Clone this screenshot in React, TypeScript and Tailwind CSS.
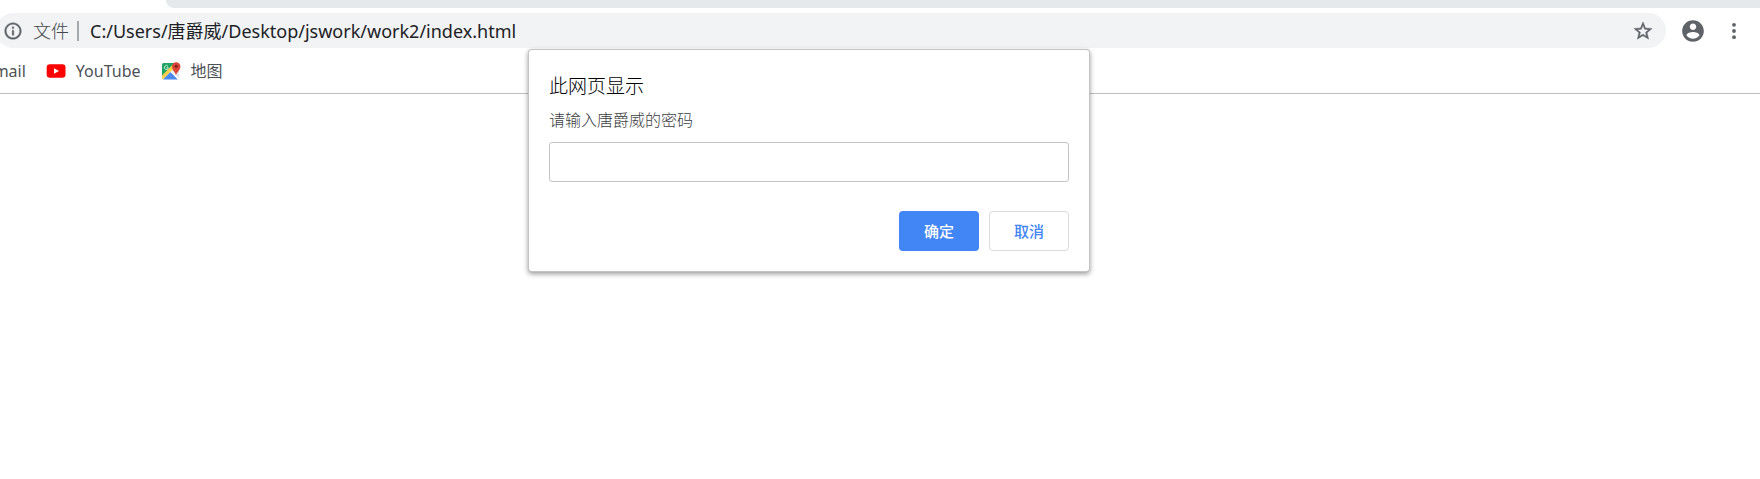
import React from "react";

function InfoIcon() {
  return (
    <svg viewBox="0 0 24 24" className="size-5 shrink-0 fill-[#5f6368]" aria-hidden="true">
      <path
        d="M11 17h2v-6h-2v6zm1-15C6.48 2 2 6.48 2 12s4.48 10 10 10 10-4.48 10-10S17.52 2 12 2zm0 18c-4.41 0-8-3.59-8-8s3.59-8 8-8 8 3.59 8 8-3.59 8-8 8zM11 9h2V7h-2v2z"
        stroke="#5f6368"
        strokeWidth="0.4"
      />
    </svg>
  );
}

function StarIcon() {
  return (
    <svg viewBox="0 0 24 24" className="size-[22px] fill-[#5f6368]" aria-hidden="true">
      <path
        d="M22 9.24l-7.19-.62L12 2 9.19 8.63 2 9.24l5.46 4.73L5.82 21 12 17.27 18.18 21l-1.63-7.03L22 9.24zM12 15.4l-3.76 2.27 1-4.28-3.32-2.88 4.38-.38L12 6.1l1.71 4.04 4.38.38-3.32 2.88 1 4.28L12 15.4z"
        stroke="#5f6368"
        strokeWidth="0.4"
      />
    </svg>
  );
}

function AccountIcon() {
  return (
    <svg viewBox="0 0 24 24" className="size-[26px] fill-[#5f6368]" aria-hidden="true">
      <path d="M12 2C6.48 2 2 6.48 2 12s4.48 10 10 10 10-4.48 10-10S17.52 2 12 2zm0 3c1.66 0 3 1.34 3 3s-1.34 3-3 3-3-1.34-3-3 1.34-3 3-3zm0 14.2c-2.5 0-4.71-1.28-6-3.22.03-1.99 4-3.08 6-3.08 1.99 0 5.97 1.09 6 3.08-1.29 1.94-3.5 3.22-6 3.22z" />
    </svg>
  );
}

function MoreIcon() {
  return (
    <svg viewBox="0 0 20 20" className="size-5 fill-[#5f6368]" aria-hidden="true">
      <circle cx="10" cy="3.800" r="1.900" />
      <circle cx="10" cy="10" r="1.900" />
      <circle cx="10" cy="16.200" r="1.900" />
    </svg>
  );
}

function YouTubeIcon() {
  return (
    <svg viewBox="0 0 20 20" className="size-5" aria-hidden="true">
      <rect x="0.7" y="3.2" width="18.8" height="13.6" rx="3.2" fill="#f00" />
      <path d="M8 7.2v5.6l5-2.8z" fill="#fff" />
    </svg>
  );
}

function MapsIcon() {
  return (
    <svg viewBox="0 0 20 20" className="size-5" aria-hidden="true">
      <path d="M1 3.5Q1 2 2.5 2H15L1 16z" fill="#1fa463" />
      <path d="M9 11l6-6 3 3v9l-1 1.500z" fill="#e4e7ea" />
      <path d="M1 14.500L12.500 3l2.500 2.500L2 18.500 1 17.500z" fill="#fdd04a" />
      <path d="M2 18.500L9.500 11l7.500 7.500z" fill="#4a89f3" />
      <path d="M8.200 12.300l1.300-1.300 7.500 7.500 1-1-7.200-7.800z" fill="#fff" />
      <path d="M15 14.500c-.3-3.500-4-5-4-9a4.200 4.200 0 0 1 8.400 0c0 4-4.100 5.500-4.400 9z" fill="#db4437" />
      <circle cx="15.200" cy="5.300" r="1.500" fill="#7d2018" />
      <path d="M7 5.300a2 2 0 1 0 .4 1.500H5.500" fill="none" stroke="#d9f1e4" strokeWidth="0.900" />
    </svg>
  );
}

function Bookmark({ label, icon }: { label: string; icon?: React.ReactNode }) {
  return (
    <a href="#" className="flex items-center gap-2.5 whitespace-nowrap">
      {icon}
      {label}
    </a>
  );
}

export default function App() {
  return (
    <div className="relative min-h-screen overflow-hidden bg-white font-['Noto_Sans','Noto_Sans_CJK_SC',sans-serif]">
      <header className="border-b border-[#bcbec0]">
        <div className="ml-[166px] h-2 rounded-bl-lg bg-[#e6e9ec]" />

        <div className="mt-[5px] flex h-[35px] items-center">
          <div className="-ml-1 flex h-full min-w-0 flex-1 items-center rounded-full bg-[#f1f3f4] pr-3 pl-[7px]">
            <InfoIcon />
            <span className="ml-2.5 shrink-0 text-lg leading-6 font-light text-[#45494d]">文件</span>
            <span className="ml-2 h-5 w-0.5 shrink-0 bg-[#a6a9ac]" />
            <input
              aria-label="地址"
              defaultValue="C:/Users/唐爵威/Desktop/jswork/work2/index.html"
              className="ml-[11px] h-6 min-w-0 flex-1 bg-transparent text-lg leading-6 text-[#202124] outline-none"
            />
            <button type="button" aria-label="收藏">
              <StarIcon />
            </button>
          </div>
          <div className="mr-4 ml-[14px] flex items-center gap-[18px]">
            <button type="button" aria-label="用户">
              <AccountIcon />
            </button>
            <button type="button" aria-label="更多">
              <MoreIcon />
            </button>
          </div>
        </div>

        <nav className="-ml-[18px] flex h-[45px] items-center gap-5 text-base text-[#4d5156]">
          <Bookmark label="Gmail" />
          <Bookmark label="YouTube" icon={<YouTubeIcon />} />
          <Bookmark label="地图" icon={<MapsIcon />} />
        </nav>
      </header>

      <form
        role="dialog"
        aria-labelledby="prompt-title"
        onSubmit={(e) => e.preventDefault()}
        className="absolute top-[50px] left-[529px] w-[560px] rounded-[3px] bg-white p-5 shadow-[0_0_0_1px_#c4c4c4,0_2px_5px_1px_rgba(0,0,0,0.4)]"
      >
        <h1 id="prompt-title" className="text-[19px] leading-8 font-light text-black">
          此网页显示
        </h1>
        <label htmlFor="prompt-value" className="mt-1.5 block text-base leading-6 font-light text-[#3c4043]">
          请输入唐爵威的密码
        </label>
        <input
          id="prompt-value"
          type="text"
          className="mt-2.5 block h-10 w-full rounded-[3px] border border-[#c4c4c4] px-3 text-base outline-none"
        />
        <div className="mt-[29px] flex justify-end gap-2.5">
          <button type="submit" className="h-10 w-20 rounded bg-[#4285f4] text-[15px] font-medium text-white">
            确定
          </button>
          <button
            type="button"
            className="h-10 w-20 rounded border border-[#dadce0] text-[15px] font-medium text-[#4285f4]"
          >
            取消
          </button>
        </div>
      </form>
    </div>
  );
}
